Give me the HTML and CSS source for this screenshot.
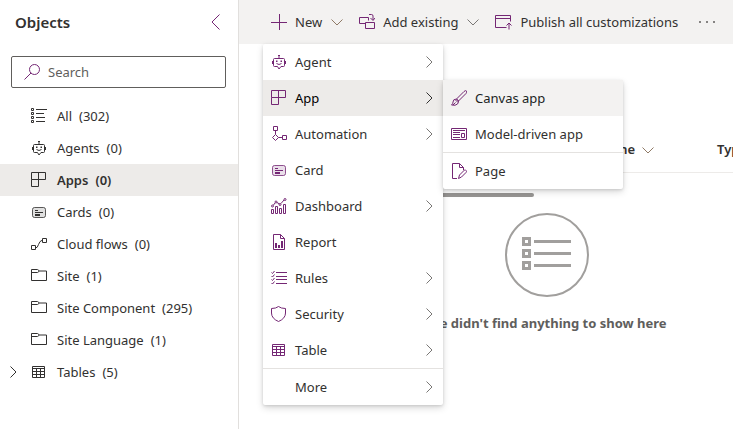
FILE: index.html
```html
<!DOCTYPE html>
<html lang="en">
<head>
<meta charset="utf-8">
<title>Objects</title>
<link rel="stylesheet" href="styles.css">
</head>
<body>
<svg class="sprite" aria-hidden="true">
  <symbol id="i-all" viewBox="0 0 16 16"><path d="M.5.5h2v2h-2zM.5 4.5h2v2h-2zM.5 8.500h2v2h-2zM.5 12.500h2v2h-2zM5 1.500h11M5 5.500h8M5 9.500h9M5 13.500h9"/></symbol>
  <symbol id="i-bot" viewBox="0 0 16 16"><path d="M3.500 4.500h9q1 0 1 1v6q0 1-1 1H10l-2 2.500-1.500-2.500h-3q-1 0-1-1v-6q0-1 1-1zM8 4.500V1M7 1.500h2M1.500 7v3M14.500 7v3M5.500 9.500q2.500 2 5 0"/><path class="solid" d="M5 6.500h1.500V8H5zM9.500 6.500H11V8H9.500z"/></symbol>
  <symbol id="i-app" viewBox="0 0 16 16"><path d="M.5.5h14v7H.5zM.5 7.500v7h7V.5"/></symbol>
  <symbol id="i-card" viewBox="0 0 16 16"><rect class="tint" x="1.500" y="3.500" width="13" height="10" rx="2"/><path d="M4 6.500h3M4 8.500h8M4 10.500h5M4 11.500h5"/></symbol>
  <symbol id="i-flow" viewBox="0 0 16 16"><path d="M.5 9.500h4v4h-4zM11.500 2.500h4v4h-4zM4.500 12q2 0 3-3.500t4-4.500"/></symbol>
  <symbol id="i-folder" viewBox="0 0 16 16"><path d="M.5 1.500h6l2 1.500h7v9.500H.5zM.5 4.500h6L8.500 3"/></symbol>
  <symbol id="i-table" viewBox="0 0 16 16"><path d="M1.500 2.500h12v11h-12zM1.500 4.500h12M1.500 7.500h12M1.500 10.500h12M5.500 4.500v9M9.500 4.500v9"/></symbol>
  <symbol id="i-search" viewBox="0 0 16 16"><circle cx="10.500" cy="5.500" r="5"/><path d="M7 9L.5 15.500"/></symbol>
  <symbol id="i-left" viewBox="0 0 9 16"><path d="M8.500.5L1 8l7.500 7.500"/></symbol>
  <symbol id="i-right" viewBox="0 0 7 12"><path d="M.5.500L6 6 .5 11.500"/></symbol>
  <symbol id="i-down" viewBox="0 0 12 7"><path d="M.5.500L6 6 11.500.500"/></symbol>
  <symbol id="i-plus" viewBox="0 0 16 16"><path d="M8.500 0v16M0 8.500h16"/></symbol>
  <symbol id="i-existing" viewBox="0 0 16 16"><path d="M6 9.500H.5v-6h9v3M6.500 8.500h9v6h-9zM10 .500h2.500q1.500 0 1.500 1.500v4M11.500 4L14 6.500 16 4"/></symbol>
  <symbol id="i-publish" viewBox="0 0 17 16"><path d="M11.500 13.500H.5V1.500h15v6M.5 4.500h15M14 15.500v-6M11.500 11.500L14 9l2.500 2.500"/></symbol>
  <symbol id="i-automation" viewBox="0 0 16 16"><path d="M2.500.500h4v4h-4zM11.500 9.500h4v4h-4zM4.500 4.500v4M4.500 8.500l3 3-3 3-3-3zM7.500 11.500h4"/></symbol>
  <symbol id="i-dashboard" viewBox="0 0 16 16"><path d="M.5 11.500h2v4h-2zM4.500 8.500h2v7h-2zM8.500 10.500h2v5h-2zM12.500 6.500h2v9h-2zM2.500 7L4 5M6 4.500l2.500 1.500M10 5.500l3-3.500"/><circle cx="1.500" cy="8" r="1"/><circle cx="5" cy="4" r="1"/><circle cx="9" cy="6.500" r="1"/><circle cx="14" cy="1.500" r="1"/></symbol>
  <symbol id="i-report" viewBox="0 0 16 16"><path d="M2.500.500h7l4 4v11h-11zM9.500.500v4h4"/><path class="solid" d="M4 9h2v5H4zM7 11h2v3H7zM10 7h2v7h-2z"/></symbol>
  <symbol id="i-rules" viewBox="0 0 16 16"><path d="M5 2.500h11M5 6.500h11M5 9.500h11M5 13.500h11M.5 2.500l1 1 2-2.500M.5 6l1 1 2-2.500M.5 9.500l1 1 2-2.500M.5 13l1 1 2-2.500"/></symbol>
  <symbol id="i-shield" viewBox="0 0 16 16"><path d="M7.500.500Q10 2.500 14.500 2.500V7q0 5.500-7 8.500Q.5 12.500.5 7V2.500Q5 2.500 7.500.500z"/></symbol>
  <symbol id="i-brush" viewBox="0 0 16 16"><path d="M5.500 9L13 1.500q1.500-1.500 2.500-.500 1 1-.5 2.500L7.500 11zM5.500 9Q2 9 2 12q0 2-1.500 3 4 1 6-1 1-1.500 1-3zM4.500 10l2.500 2.500M2 15l2.500-2.500"/></symbol>
  <symbol id="i-model" viewBox="0 0 16 16"><path d="M.5 2.500h15v11H.5zM2 4.500h12M2 6.500h7M2 8.500h7M2 11.500h7M10.500 7.500h3v4h-3z"/></symbol>
  <symbol id="i-page" viewBox="0 0 16 16"><path d="M6 15.500H1.500V.500h7l4 4v2.500M8.500.500v4h4M7.500 15.500l1-3.500 5-5q1-.500 1.500.500 1 1 0 2L10.500 14z"/></symbol>
</svg>
<div class="shell">
  <aside class="side">
    <header class="side-head">
      <h1>Objects</h1>
      <button class="collapse" aria-label="Collapse"><svg class="chev-left"><use href="#i-left"/></svg></button>
    </header>
    <label class="search">
      <svg class="icon accent"><use href="#i-search"/></svg>
      <input type="search" placeholder="Search" aria-label="Search">
    </label>
    <nav class="tree">
      <a href="#all"><span class="twist"></span><svg class="icon"><use href="#i-all"/></svg><span>All</span><span class="count">(302)</span></a>
      <a href="#agents"><span class="twist"></span><svg class="icon"><use href="#i-bot"/></svg><span>Agents</span><span class="count">(0)</span></a>
      <a href="#apps" class="selected" aria-current="page"><span class="twist"></span><svg class="icon"><use href="#i-app"/></svg><span>Apps</span><span class="count">(0)</span></a>
      <a href="#cards"><span class="twist"></span><svg class="icon"><use href="#i-card"/></svg><span>Cards</span><span class="count">(0)</span></a>
      <a href="#flows"><span class="twist"></span><svg class="icon"><use href="#i-flow"/></svg><span>Cloud flows</span><span class="count">(0)</span></a>
      <a href="#site"><span class="twist"></span><svg class="icon"><use href="#i-folder"/></svg><span>Site</span><span class="count">(1)</span></a>
      <a href="#component"><span class="twist"></span><svg class="icon"><use href="#i-folder"/></svg><span>Site Component</span><span class="count">(295)</span></a>
      <a href="#language"><span class="twist"></span><svg class="icon"><use href="#i-folder"/></svg><span>Site Language</span><span class="count">(1)</span></a>
      <a href="#tables"><span class="twist"><svg class="chev"><use href="#i-right"/></svg></span><svg class="icon"><use href="#i-table"/></svg><span>Tables</span><span class="count">(5)</span></a>
    </nav>
  </aside>
  <main class="main">
    <div class="toolbar">
      <button><svg class="icon accent"><use href="#i-plus"/></svg>New<svg class="chev-down warm"><use href="#i-down"/></svg></button>
      <button><svg class="icon accent"><use href="#i-existing"/></svg>Add existing<svg class="chev-down"><use href="#i-down"/></svg></button>
      <button><svg class="icon wide accent"><use href="#i-publish"/></svg>Publish all customizations</button>
      <button class="dots" aria-label="More commands"><i></i><i></i><i></i></button>
    </div>
    <section class="list">
      <table>
        <thead><tr><th class="name">Name<svg class="chev-down warm"><use href="#i-down"/></svg></th><th>Type</th></tr></thead>
      </table>
      <div class="scroll-thumb"></div>
      <div class="empty">
        <svg class="empty-art" viewBox="0 0 84 84">
          <circle cx="42" cy="42" r="41"/>
          <path class="boxes" d="M18.500 25.500h6v6h-6zM18.500 37.500h6v6h-6zM18.500 49.500h6v6h-6z"/>
          <path class="rules" d="M29 28.500h37M29 40.500h37M29 52.500h37"/>
        </svg>
        <p>We didn't find anything to show here</p>
      </div>
    </section>
    <div class="menu root-menu">
      <button><svg class="icon"><use href="#i-bot"/></svg><span>Agent</span><svg class="chev"><use href="#i-right"/></svg></button>
      <button class="open"><svg class="icon"><use href="#i-app"/></svg><span>App</span><svg class="chev"><use href="#i-right"/></svg></button>
      <button><svg class="icon"><use href="#i-automation"/></svg><span>Automation</span><svg class="chev"><use href="#i-right"/></svg></button>
      <button><svg class="icon"><use href="#i-card"/></svg><span>Card</span></button>
      <button><svg class="icon"><use href="#i-dashboard"/></svg><span>Dashboard</span><svg class="chev"><use href="#i-right"/></svg></button>
      <button><svg class="icon"><use href="#i-report"/></svg><span>Report</span></button>
      <button><svg class="icon"><use href="#i-rules"/></svg><span>Rules</span><svg class="chev"><use href="#i-right"/></svg></button>
      <button><svg class="icon"><use href="#i-shield"/></svg><span>Security</span><svg class="chev"><use href="#i-right"/></svg></button>
      <button><svg class="icon"><use href="#i-table"/></svg><span>Table</span><svg class="chev"><use href="#i-right"/></svg></button>
      <hr>
      <button><svg class="icon"></svg><span>More</span><svg class="chev"><use href="#i-right"/></svg></button>
    </div>
    <div class="menu sub-menu">
      <button class="hover"><svg class="icon"><use href="#i-brush"/></svg><span>Canvas app</span></button>
      <button><svg class="icon"><use href="#i-model"/></svg><span>Model-driven app</span></button>
      <hr>
      <button><svg class="icon"><use href="#i-page"/></svg><span>Page</span></button>
    </div>
  </main>
</div>
</body>
</html>
```
FILE: styles.css
```css
* { box-sizing: border-box; }
body {
  margin: 0;
  font: 13px/20px "Noto Sans", "Open Sans", sans-serif;
  color: #323130;
  background: #fff;
}
button { font: inherit; color: inherit; background: none; border: 0; padding: 0; }
svg { flex: none; fill: none; stroke: currentColor; stroke-width: 1; }
.sprite { position: absolute; width: 0; height: 0; }
.solid { fill: currentColor; stroke: none; }
.tint { fill: currentColor; fill-opacity: .15; stroke-opacity: .8; }
.icon { width: 16px; height: 16px; }
.icon.wide { width: 17px; }
.accent { color: #742774; }
.chev { width: 7px; height: 12px; }
.chev-down { width: 12px; height: 7px; color: #797775; }
.chev-down.warm { color: #8f7a66; }
.chev-left { width: 9px; height: 16px; color: #742774; display: block; }

.shell { display: flex; min-height: 100vh; }
.side { flex: none; width: 239px; border-right: 1px solid #e1dfdd; }
.side-head {
  display: flex;
  align-items: center;
  justify-content: space-between;
  height: 44px;
  padding: 0 18px 0 15px;
}
h1 { margin: 0; font-size: 15px; line-height: 20px; font-weight: 600; }
.search {
  display: flex;
  align-items: center;
  gap: 8px;
  height: 32px;
  margin: 12px 12px 12px 11px;
  padding: 0 12px;
  border: 1px solid #605e5c;
  border-radius: 2px;
}
.search input {
  flex: 1;
  min-width: 0;
  border: 0;
  padding: 0;
  outline: 0;
  font: inherit;
  background: none;
}
.search input::placeholder { color: #605e5c; opacity: 1; }
.tree a {
  display: flex;
  align-items: center;
  height: 32px;
  padding-left: 10px;
  color: inherit;
  text-decoration: none;
}
.tree .selected { background: #edebe9; font-weight: 600; }
.twist { display: flex; width: 21px; }
.tree .icon { margin-right: 10px; }
.count { margin-left: 7px; }

.main { position: relative; flex: 1; min-width: 0; overflow: hidden; }
.toolbar {
  display: flex;
  align-items: center;
  gap: 16px;
  height: 44px;
  padding-left: 32px;
  background: #f3f2f1;
  white-space: nowrap;
}
.toolbar button { display: flex; align-items: center; gap: 8px; }
.toolbar .chev-down { margin-left: 1px; }
.toolbar .dots { gap: 5px; margin-left: 5px; }
.dots i { width: 2px; height: 2px; border-radius: 1px; background: #605e5c; }

.list { min-width: 584px; margin-left: 32px; padding: 83px 32px 0 0; }
table { width: 100%; border-collapse: collapse; }
th {
  height: 45px;
  padding: 0;
  border-bottom: 1px solid #edebe9;
  text-align: left;
  font-weight: 600;
}
th.name { width: 446px; padding-left: 326px; }
th .chev-down { margin-left: 7px; }
.scroll-thumb { width: 263px; height: 4px; margin-top: 20px; border-radius: 2px; background: #979593; }
.empty { margin-top: 16px; text-align: center; }
.empty-art { display: block; width: 84px; height: 84px; margin: 0 auto; stroke: #a19f9d; stroke-width: 2; }
.empty-art .boxes, .empty-art .rules { stroke-width: 3; }
.empty p { margin: 16px 0 0; font-weight: 700; color: #605e5c; }

.menu {
  position: absolute;
  width: 180px;
  background: #fff;
  border-radius: 2px;
  box-shadow: 0 3px 7px rgba(0, 0, 0, .15), 0 1px 3px rgba(0, 0, 0, .12);
}
.root-menu { left: 24px; top: 44px; }
.sub-menu { left: 204px; top: 80px; }
.menu button {
  display: flex;
  align-items: center;
  gap: 8px;
  width: 100%;
  height: 36px;
  padding: 0 10px 0 8px;
  text-align: left;
}
.menu span { flex: 1; }
.menu .icon { color: #742774; }
.menu .chev { color: #797775; }
.menu .open { background: #edebe9; color: #000; }
.menu .open .chev { color: #323130; }
.menu .hover { background: #f3f2f1; color: #201f1e; }
.menu hr { height: 1px; margin: 0; border: 0; background: #e4e2e0; }
```
